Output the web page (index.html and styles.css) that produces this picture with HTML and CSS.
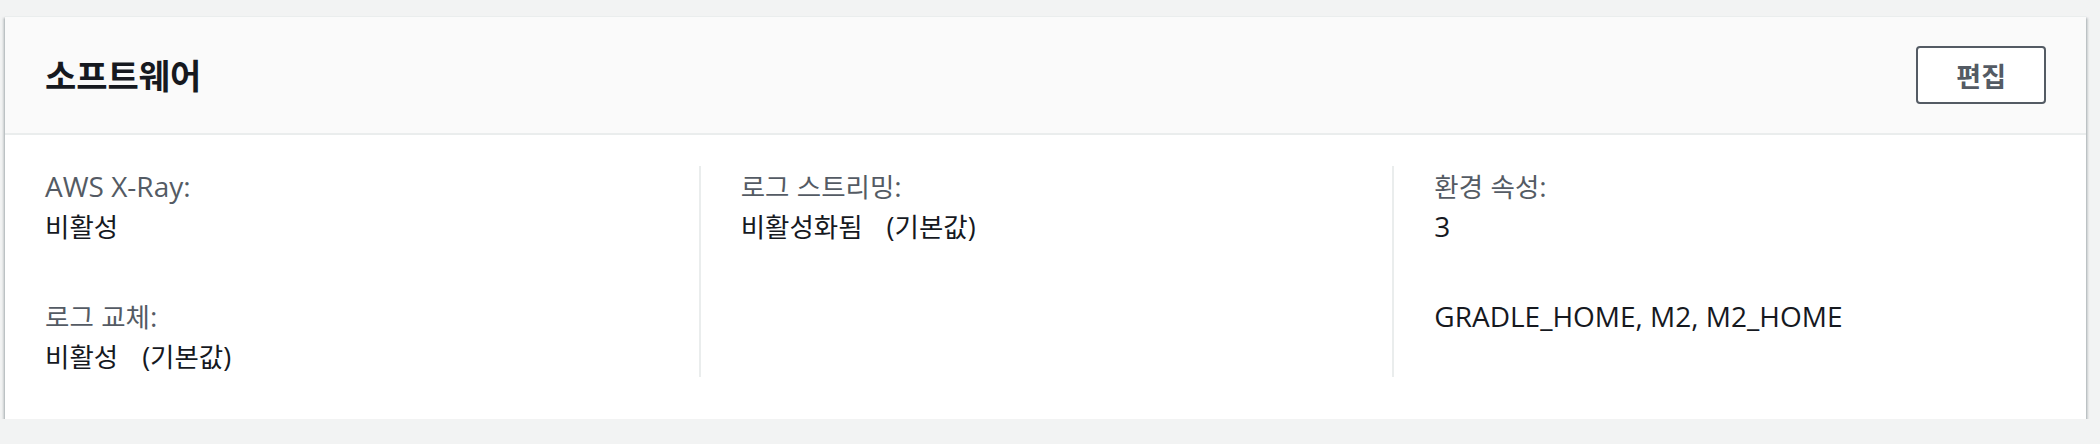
FILE: index.html
```html
<!DOCTYPE html>
<html lang="ko">
<head>
<meta charset="utf-8">
<title>소프트웨어</title>
<link rel="stylesheet" href="styles.css">
</head>
<body>
  <div class="card">
    <div class="card-header">
      <h2 class="title">소프트웨어</h2>
      <button class="btn" type="button">편집</button>
    </div>
    <div class="card-body">
      <div class="col">
        <div class="field">
          <div class="label">AWS X-Ray:</div>
          <div class="value"><span class="ko">비활성</span></div>
        </div>
        <div class="field">
          <div class="label"><span class="ko">로그 교체</span>:</div>
          <div class="value"><span class="ko">비활성</span><span class="note">(<span class="ko">기본값</span>)</span></div>
        </div>
      </div>
      <div class="col">
        <div class="field">
          <div class="label"><span class="ko">로그 스트리밍</span>:</div>
          <div class="value"><span class="ko">비활성화됨</span><span class="note">(<span class="ko">기본값</span>)</span></div>
        </div>
      </div>
      <div class="col">
        <div class="field">
          <div class="label"><span class="ko">환경 속성</span>:</div>
          <div class="value">3</div>
        </div>
        <div class="field">
          <div class="value">GRADLE_HOME, M2, M2_HOME</div>
        </div>
      </div>
    </div>
  </div>
</body>
</html>
```

FILE: styles.css
```css
html, body {
  margin: 0;
  background: #f2f3f3;
}

body {
  padding: 16px 14px 0 5px;
  font-family: "Open Sans", "Noto Sans CJK KR", sans-serif;
  font-size: 28px;
  color: #16191f;
}

.card {
  background: #ffffff;
  border-top: 1px solid #eaeded;
  box-shadow: 0 2px 2px 0 rgba(0, 28, 36, 0.3),
              2px 2px 2px 0 rgba(0, 28, 36, 0.15),
              -2px 2px 2px 0 rgba(0, 28, 36, 0.15);
}

.card-header {
  display: flex;
  justify-content: space-between;
  align-items: center;
  height: 116px;
  padding: 0 40px;
  background: #fafafa;
  border-bottom: 2px solid #eaeded;
}

.title {
  margin: 0;
  font-family: "Noto Sans CJK KR", sans-serif;
  font-weight: 700;
  font-size: 34px;
  line-height: 1;
  color: #16191f;
}

.btn {
  height: 58px;
  padding: 0 38px;
  background: #ffffff;
  border: 2px solid #545b64;
  border-radius: 4px;
  font-family: "Noto Sans CJK KR", sans-serif;
  font-weight: 700;
  font-size: 27px;
  line-height: 1;
  color: #545b64;
}

.card-body {
  display: grid;
  grid-template-columns: repeat(3, 1fr);
  padding: 31px 0 42px;
}

.col {
  padding: 0 40px;
}

.col + .col {
  border-left: 2px solid #eaeded;
}

.field {
  line-height: 40px;
}

.field + .field {
  margin-top: 50px;
}

.label {
  color: #545b64;
}

.value {
  color: #16191f;
}

.ko {
  font-family: "Noto Sans CJK KR", sans-serif;
  font-size: 26.5px;
}

.note {
  margin-left: 24px;
  font-size: 27px;
}
```
